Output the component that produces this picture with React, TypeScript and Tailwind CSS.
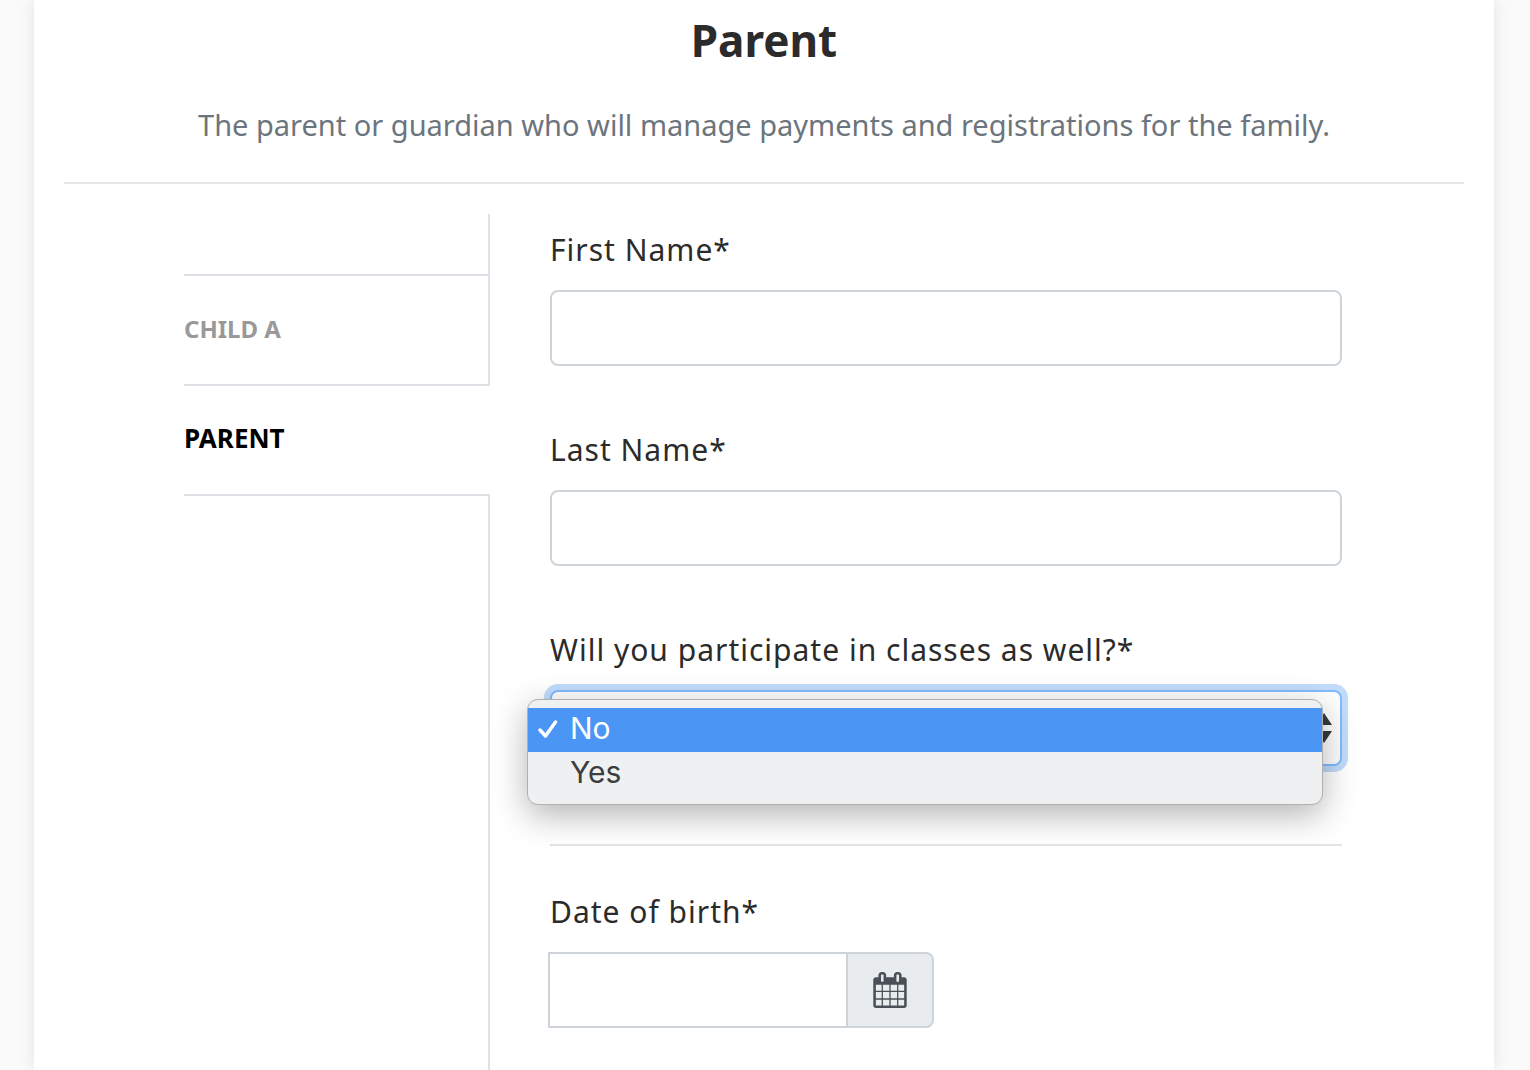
import { useState } from 'react';
import type { ReactNode } from 'react';

const tabs = [
  { id: 'child', label: 'CHILD A', active: false },
  { id: 'parent', label: 'PARENT', active: true },
];

const options = ['No', 'Yes'];

function CalendarIcon() {
  return (
    <svg viewBox="64 0 1664 1792" className="w-[34px] h-9" fill="currentColor" aria-hidden="true">
      <path d="M192 1664h288v-288h-288v288zm352 0h320v-288h-320v288zm-352-352h288v-320h-288v320zm352 0h320v-320h-320v320zm-352-384h288v-288h-288v288zm736 736h320v-288h-320v288zm-384-736h320v-288h-320v288zm768 736h288v-288h-288v288zm-384-352h320v-320h-320v320zm-352-864v-288q0-13-9.500-22.500t-22.500-9.500h-64q-13 0-22.500 9.500t-9.500 22.500v288q0 13 9.500 22.500t22.500 9.500h64q13 0 22.500-9.500t9.500-22.500zm736 864h288v-320h-288v320zm-384-384h320v-288h-320v288zm384 0h288v-288h-288v288zm32-480v-288q0-13-9.500-22.500t-22.500-9.500h-64q-13 0-22.500 9.500t-9.500 22.500v288q0 13 9.500 22.500t22.500 9.500h64q13 0 22.500-9.500t9.500-22.500zm384-64v1280q0 52-38 90t-90 38h-1408q-52 0-90-38t-38-90v-1280q0-52 38-90t90-38h128v-96q0-66 47-113t113-47h64q66 0 113 47t47 113v96h384v-96q0-66 47-113t113-47h64q66 0 113 47t47 113v96h128q52 0 90 38t38 90z" />
    </svg>
  );
}

function Field({ id, label, children }: { id: string; label: string; children: ReactNode }) {
  return (
    <div>
      <label htmlFor={id} className="block mb-[18px] text-[30px] leading-[44px] tracking-[1px] text-[#2b2b2b]">
        {label}
      </label>
      {children}
    </div>
  );
}

export default function App() {
  const [participate, setParticipate] = useState('No');

  return (
    <div className="flex min-h-screen bg-[#fafafa] pl-[34px] pr-9 font-['Noto_Sans',sans-serif]">
      <main className="flex flex-col flex-1 px-[30px] bg-white shadow-[0_0_15px_rgba(0,0,0,0.1)]">
        <header className="pt-2 pb-[34px] text-center border-b-2 border-[#e5e5e5]">
          <h1 className="text-[44px] leading-[64px] font-bold text-[#2b2b2b]">Parent</h1>
          <p className="mt-[30px] text-[29px] leading-[46px] text-[#6c757d]">
            The parent or guardian who will manage payments and registrations for the family.
          </p>
        </header>

        <div className="flex flex-1 pt-[30px] pl-[120px] pr-[122px]">
          <nav className="flex flex-col w-[306px] shrink-0">
            <div className="h-[62px] border-r-2 border-b-2 border-[#dee2e6]" />
            {tabs.map((tab) => (
              <a
                key={tab.id}
                href={`#${tab.id}`}
                className={
                  tab.active
                    ? 'flex items-center h-[110px] pb-[3px] border-b-2 border-[#dee2e6] text-[26px] font-bold text-black'
                    : 'flex items-center h-[110px] pb-[3px] border-r-2 border-b-2 border-[#dee2e6] text-2xl font-bold text-[#999999]'
                }
              >
                {tab.label}
              </a>
            ))}
            <div className="flex-1 border-r-2 border-[#dee2e6]" />
          </nav>

          <form className="flex-1 pl-[60px] pt-[14px] pb-[42px]">
            <div className="space-y-[62px]">
              <Field id="first-name" label="First Name*">
                <input
                  id="first-name"
                  type="text"
                  className="block w-full h-[76px] px-6 text-[30px] bg-white border-2 border-[#ced4da] rounded-lg"
                />
              </Field>
              <Field id="last-name" label="Last Name*">
                <input
                  id="last-name"
                  type="text"
                  className="block w-full h-[76px] px-6 text-[30px] bg-white border-2 border-[#ced4da] rounded-lg"
                />
              </Field>
              <Field id="participate" label="Will you participate in classes as well?*">
                <div className="relative">
                  <select
                    id="participate"
                    value={participate}
                    onChange={(e) => setParticipate(e.target.value)}
                    className="block w-full h-[76px] px-6 text-[30px] appearance-none bg-white border-2 border-[#80bdff] rounded-lg outline-none shadow-[0_0_0_6px_#c2dcfc]"
                  >
                    {options.map((option) => (
                      <option key={option}>{option}</option>
                    ))}
                  </select>
                  <svg
                    viewBox="0 0 16 30"
                    className="absolute right-[10px] top-[23px] w-4 h-[30px] pointer-events-none"
                    fill="#343a40"
                    aria-hidden="true"
                  >
                    <path d="M8 0l8 12H0zM8 30l8-12H0z" />
                  </svg>
                  <ul
                    role="listbox"
                    aria-label="Participate options"
                    className="absolute top-[9px] -left-[23px] right-[19px] py-2 rounded-[11px] bg-[#eff0f2] border border-[#b0b0b0] shadow-[0_10px_34px_rgba(0,0,0,0.3)] font-[Inter,sans-serif]"
                  >
                    {options.map((option) => (
                      <li
                        key={option}
                        role="option"
                        aria-selected={option === participate}
                        onClick={() => setParticipate(option)}
                        className={
                          option === participate
                            ? 'flex items-center h-11 pl-[10px] pb-[5px] bg-[#4b95f5] text-[30px] leading-9 text-white'
                            : 'flex items-center h-11 pl-[10px] pb-[5px] text-[30px] leading-9 text-[#3c3d3f]'
                        }
                      >
                        <span className="w-8">
                          {option === participate && (
                            <svg viewBox="0 0 20 20" className="w-5 h-5" fill="none" aria-hidden="true">
                              <path d="M2 12l5.500 6L17.500 4" stroke="currentColor" strokeWidth="3.500" strokeLinecap="round" strokeLinejoin="round" />
                            </svg>
                          )}
                        </span>
                        {option}
                      </li>
                    ))}
                  </ul>
                </div>
              </Field>
            </div>

            <hr className="mt-[78px] mb-[44px] border-t-2 border-[#e5e5e5]" />

            <Field id="dob" label="Date of birth*">
              <div className="flex -ml-0.5">
                <input
                  id="dob"
                  type="text"
                  className="block w-[300px] h-[76px] px-6 text-[30px] bg-white border-2 border-[#ced4da]"
                />
                <button
                  type="button"
                  aria-label="Open calendar"
                  className="flex items-center justify-center w-[88px] h-[76px] -ml-0.5 bg-[#e9ecef] border-2 border-[#ced4da] rounded-r-lg text-[#495057]"
                >
                  <CalendarIcon />
                </button>
              </div>
            </Field>
          </form>
        </div>
      </main>
    </div>
  );
}
